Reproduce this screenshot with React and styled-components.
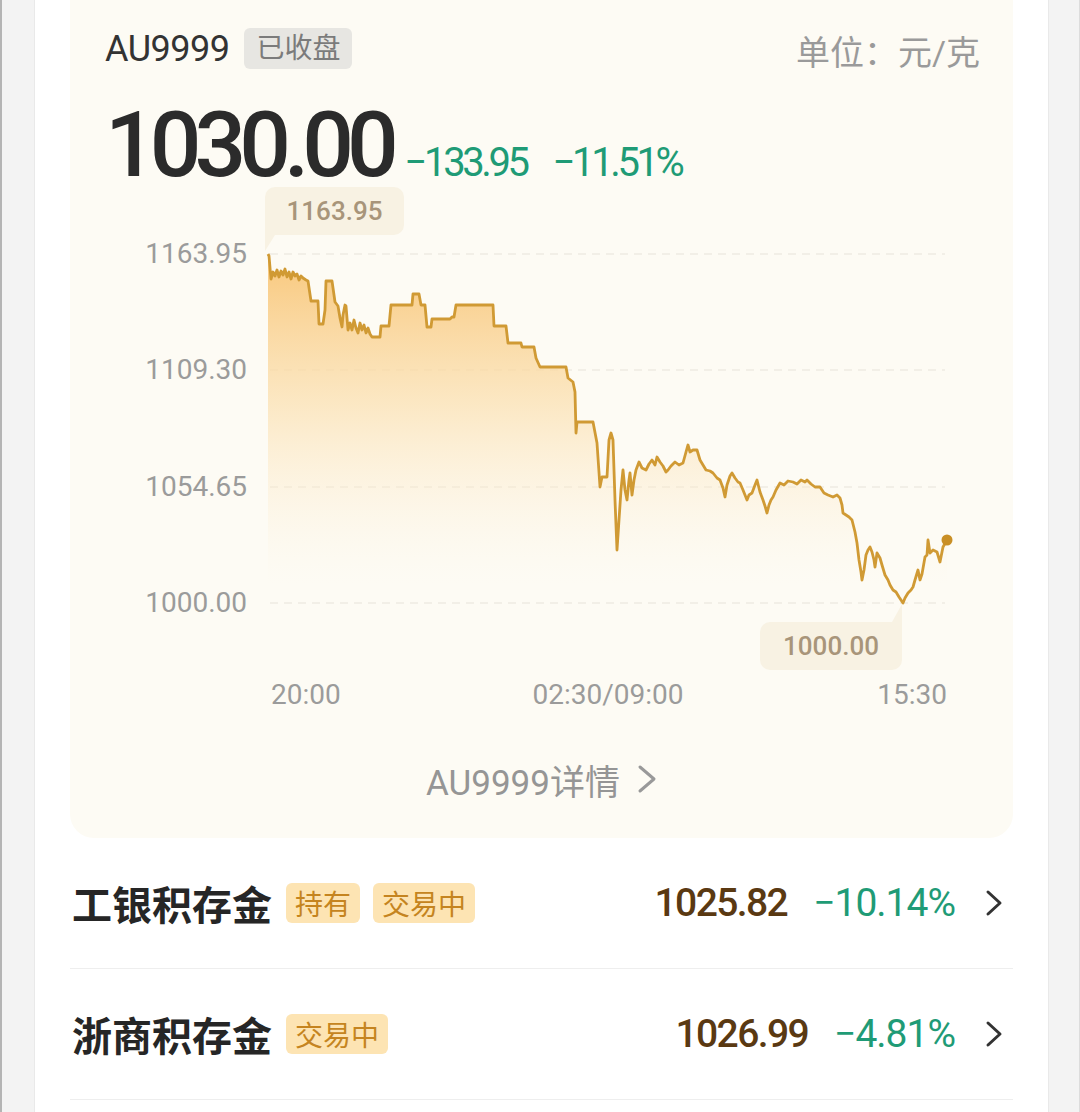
import React from "react";
import styled, { createGlobalStyle } from "styled-components";

const GlobalStyle = createGlobalStyle`
  html, body {
    margin: 0;
    padding: 0;
    background: #ffffff;
    font-family: Roboto, "Noto Sans CJK SC", sans-serif;
  }
`;

const GREEN = "#1f9b76";

// price line, traced in page coordinates
const line = [
  [268,254],[269,256],[271,279],[273,272],[275,276],[277,270],[279,277],[281,271],[283,275],[285,269],
  [287,277],[289,272],[291,279],[293,272],[295,276],[297,274],[299,280],[301,276],[303,278],[306,280],
  [308,281],[311,301],[318,301],[319,324],[323,324],[325,310],[326,281],[332,281],[335,302],[338,306],
  [340,318],[342,327],[343,315],[345,305],[346,306],[348,330],[350,323],[352,330],[354,320],[356,328],
  [358,333],[360,323],[362,330],[364,325],[366,333],[368,328],[370,334],[372,337],[380,337],[381,326],
  [389,326],[391,305],[412,305],[413,294],[419,294],[421,305],[425,305],[427,327],[431,327],[432,319],
  [450,319],[452,317],[454,317],[456,305],[493,305],[494,326],[506,326],[508,343],[521,343],[522,347],
  [534,347],[536,358],[540,367],[566,367],[568,378],[573,382],[575,392],[576,433],[577,422],[593,422],
  [597,443],[600,487],[602,477],[607,477],[609,440],[611,433],[613,440],[615,500],[617,550],[619,520],
  [621,490],[623,470],[625,490],[627,500],[629,480],[630,473],[632,495],[634,480],[636,470],[639,462],
  [642,468],[646,470],[649,464],[652,460],[655,465],[657,457],[660,462],[663,466],[666,472],[668,470],
  [671,466],[675,462],[679,465],[683,463],[686,452],[688,445],[690,452],[693,450],[697,450],[700,460],
  [703,465],[706,470],[710,471],[713,473],[717,478],[720,480],[723,488],[725,497],[727,485],[730,476],
  [732,473],[735,478],[738,482],[740,483],[743,490],[747,500],[749,495],[752,493],[755,485],[757,480],
  [760,492],[763,500],[765,506],[767,513],[769,505],[771,500],[773,497],[776,490],[780,483],[784,485],
  [788,481],[793,482],[797,484],[801,480],[805,482],[807,480],[811,484],[815,487],[820,487],[824,493],
  [828,495],[833,497],[837,495],[840,498],[842,505],[843,513],[846,515],[849,517],[852,520],[855,532],
  [857,543],[859,560],[861,572],[862,580],[864,570],[866,555],[868,550],[870,547],[872,552],[874,560],
  [875,567],[877,553],[880,558],[882,565],[885,575],[888,580],[890,585],[893,590],[896,592],[899,597],
  [901,600],[903,603],[905,598],[908,593],[911,590],[913,587],[915,580],[918,570],[920,580],[922,574],
  [925,557],[927,555],[928,540],[930,553],[933,550],[937,552],[940,562],[943,547],[947,540],
];

const yTicks = [
  { label: "1163.95", y: 254 },
  { label: "1109.30", y: 370 },
  { label: "1054.65", y: 487 },
  { label: "1000.00", y: 603 },
];

const xTicks = [
  { label: "20:00", x: 271, anchor: "start" },
  { label: "02:30/09:00", x: 608, anchor: "middle" },
  { label: "15:30", x: 947, anchor: "end" },
];

const products = [
  { name: "工银积存金", tags: ["持有", "交易中"], price: "1025.82", pct: "−10.14%" },
  { name: "浙商积存金", tags: ["交易中"], price: "1026.99", pct: "−4.81%" },
];

const Page = styled.div`
  display: flex;
  height: 1112px;
  overflow: hidden;
`;

const Rail = styled.div`
  width: ${(p) => p.$w}px;
  flex: none;
  background: #f3f3f3;
  border-left: ${(p) => (p.$side === "left" ? "2px solid #b4b4b4" : "1px solid #e9e9e9")};
  border-right: ${(p) => (p.$side === "left" ? "1px solid #e9e9e9" : "2px solid #dcdcdc")};
  box-sizing: border-box;
`;

const Main = styled.main`
  flex: 1;
  padding: 0 35px;
  background: #ffffff;
`;

const Card = styled.section`
  background: #fdfbf4;
  border-radius: 0 0 24px 24px;
  padding: 28px 0 39px;
`;

const HeaderRow = styled.div`
  display: flex;
  align-items: center;
  height: 41px;
  padding: 0 33px 0 35px;
`;

const Symbol = styled.span`
  font-size: 36px;
  color: #333333;
  letter-spacing: -0.5px;
`;

const StatusTag = styled.span`
  margin-left: 15px;
  height: 41px;
  line-height: 41px;
  padding: 0 12px;
  border-radius: 6px;
  background: #e7e6e2;
  color: #7b7b7b;
  font-size: 28px;
`;

const Unit = styled.span`
  margin-left: auto;
  margin-top: 4px;
  font-size: 34px;
  color: #9a9a9a;
`;

const PriceRow = styled.div`
  display: flex;
  align-items: baseline;
  margin-top: 31px;
  padding-left: 35px;
  height: 90px;
`;

const BigPrice = styled.span`
  font-size: 91px;
  line-height: 90px;
  font-weight: 500;
  letter-spacing: -7px;
  color: #2b2b2b;
`;

const Change = styled.span`
  margin-left: ${(p) => p.$gap}px;
  font-size: 40px;
  letter-spacing: -3.4px;
  color: ${GREEN};
`;

const ChartWrap = styled.div`
  position: relative;
  height: 530px;
`;

const ChartSvg = styled.svg`
  display: block;
  font-family: Roboto, sans-serif;
`;

const Bubble = styled.div`
  position: absolute;
  left: ${(p) => p.$x}px;
  top: ${(p) => p.$y}px;
  width: ${(p) => p.$w}px;
  height: 48px;
  line-height: 48px;
  text-align: center;
  border-radius: 10px;
  background: #f8f2e3;
  color: #a8957a;
  font-size: 26px;
  font-weight: 500;
  border-${(p) => (p.$tail === "down" ? "bottom-left" : "top-right")}-radius: 0;

  &::after {
    content: "";
    position: absolute;
    ${(p) =>
      p.$tail === "down"
        ? `left: 0; top: 100%; border-left: 10px solid #f8f2e3; border-bottom: 16px solid transparent;`
        : `right: 0; bottom: 100%; border-right: 10px solid #f8f2e3; border-top: 18px solid transparent;`}
  }
`;

const DetailLink = styled.div`
  display: flex;
  justify-content: center;
  align-items: center;
  gap: 17px;
  margin-top: 39px;
  height: 40px;
  font-size: 35px;
  color: #959595;
`;

const List = styled.ul`
  list-style: none;
  margin: 0;
  padding: 0;
`;

const Row = styled.li`
  display: flex;
  align-items: center;
  height: 130px;
  padding: 0 10px 0 2px;
  border-bottom: 1px solid #eeeeee;
`;

const Name = styled.span`
  font-family: "Noto Sans CJK SC", sans-serif;
  font-size: 40px;
  font-weight: 700;
  color: #262626;
  margin-right: 1px;
`;

const Tag = styled.span`
  margin-left: 13px;
  height: 40px;
  line-height: 40px;
  padding: 0 9px;
  border-radius: 6px;
  background: #fde4b3;
  color: #c58420;
  font-family: "Noto Sans CJK SC", sans-serif;
  font-size: 28px;
`;

const Price = styled.span`
  margin-left: auto;
  font-size: 39px;
  font-weight: 500;
  letter-spacing: -1.6px;
  color: #5a3912;
`;

const Pct = styled.span`
  margin-left: 26px;
  font-size: 39px;
  letter-spacing: -1px;
  color: ${GREEN};
`;

const Chevron = ({ color = "#333", w = 16, h = 26, sw = 3 }) => (
  <svg width={w} height={h} viewBox={`0 0 ${w} ${h}`} fill="none">
    <path
      d={`M${sw} ${sw} L${w - sw} ${h / 2} L${sw} ${h - sw}`}
      stroke={color}
      strokeWidth={sw}
      strokeLinecap="round"
      strokeLinejoin="round"
    />
  </svg>
);

const ChevronBox = styled.span`
  display: flex;
  margin-left: ${(p) => p.$gap}px;
`;

function PriceChart() {
  const pts = line.map(([x, y]) => `${x},${y}`).join(" ");
  const area = `268,603 ${pts} 947,603`;
  const [lx, ly] = line[line.length - 1];
  return (
    <ChartWrap>
      <ChartSvg width="943" height="530" viewBox="70 190 943 530">
        <defs>
          <linearGradient id="goldFill" x1="0" y1="254" x2="0" y2="585" gradientUnits="userSpaceOnUse">
            <stop offset="0" stopColor="#f8c474" stopOpacity="0.95" />
            <stop offset="0.45" stopColor="#fbdfae" stopOpacity="0.7" />
            <stop offset="1" stopColor="#fdf3e0" stopOpacity="0" />
          </linearGradient>
        </defs>
        {yTicks.map((t) => (
          <g key={t.label}>
            <line x1="270" x2="945" y1={t.y} y2={t.y} stroke="#e8e4da" strokeWidth="1.2" strokeDasharray="8 6" />
            <text x="247" y={t.y + 9} textAnchor="end" fontSize="28" fill="#9b9b9b">
              {t.label}
            </text>
          </g>
        ))}
        <polygon points={area} fill="url(#goldFill)" />
        <polyline points={pts} fill="none" stroke="#d09a34" strokeWidth="2.8" strokeLinejoin="round" />
        <circle cx={lx} cy={ly} r="5.5" fill="#c98f25" />
        {xTicks.map((t) => (
          <text key={t.label} x={t.x} y="704" textAnchor={t.anchor} fontSize="28" fill="#9b9b9b">
            {t.label}
          </text>
        ))}
      </ChartSvg>
      <Bubble $x={195} $y={-3} $w={139} $tail="down">1163.95</Bubble>
      <Bubble $x={690} $y={432} $w={142} $tail="up">1000.00</Bubble>
    </ChartWrap>
  );
}

export default function App() {
  return (
    <>
      <GlobalStyle />
      <Page>
        <Rail $w={35} $side="left" />
        <Main>
          <Card>
            <HeaderRow>
              <Symbol>AU9999</Symbol>
              <StatusTag>已收盘</StatusTag>
              <Unit>单位：元/克</Unit>
            </HeaderRow>
            <PriceRow>
              <BigPrice>1030.00</BigPrice>
              <Change $gap={13}>−133.95</Change>
              <Change $gap={26}>−11.51%</Change>
            </PriceRow>
            <PriceChart />
            <DetailLink>
              <span>AU9999详情</span>
              <Chevron color="#999" w={20} h={30} sw={3} />
            </DetailLink>
          </Card>
          <List>
            {products.map((p) => (
              <Row key={p.name}>
                <Name>{p.name}</Name>
                {p.tags.map((t) => (
                  <Tag key={t}>{t}</Tag>
                ))}
                <Price>{p.price}</Price>
                <Pct>{p.pct}</Pct>
                <ChevronBox $gap={30}>
                  <Chevron color="#333" w={18} h={28} sw={3} />
                </ChevronBox>
              </Row>
            ))}
          </List>
        </Main>
        <Rail $w={33} $side="right" />
      </Page>
    </>
  );
}
